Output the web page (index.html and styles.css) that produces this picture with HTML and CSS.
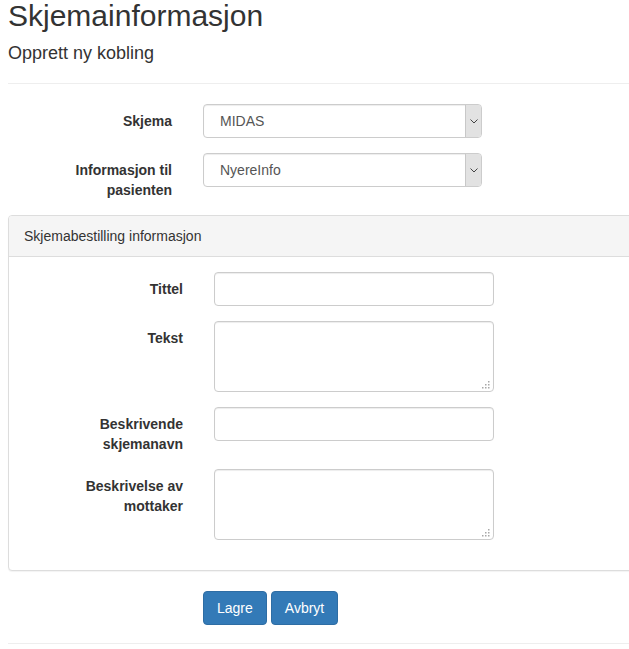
FILE: index.html
```html
<!DOCTYPE html>
<html lang="no">
<head>
<meta charset="utf-8">
<title>Skjemainformasjon</title>
<link rel="stylesheet" href="styles.css">
</head>
<body>
<div class="page">
  <h1 class="title">Skjemainformasjon</h1>
  <h2 class="subtitle">Opprett ny kobling</h2>
  <hr class="rule">
  <form class="form">
    <div class="row">
      <label class="label label-outer">Skjema</label>
      <div class="select-wrap">
        <select class="select"><option>MIDAS</option></select>
        <span class="arrow"><svg width="8" height="5" viewBox="0 0 8 5"><path d="M0.5 0.5 L4 4 L7.5 0.5" fill="none" stroke="#444" stroke-width="1"/></svg></span>
      </div>
    </div>
    <div class="row">
      <label class="label label-outer">Informasjon til pasienten</label>
      <div class="select-wrap">
        <select class="select"><option>NyereInfo</option></select>
        <span class="arrow"><svg width="8" height="5" viewBox="0 0 8 5"><path d="M0.5 0.5 L4 4 L7.5 0.5" fill="none" stroke="#444" stroke-width="1"/></svg></span>
      </div>
    </div>

    <div class="panel">
      <div class="panel-heading">Skjemabestilling informasjon</div>
      <div class="panel-body">
        <div class="row">
          <label class="label label-inner">Tittel</label>
          <input class="input" type="text">
        </div>
        <div class="row">
          <label class="label label-inner">Tekst</label>
          <div class="area-wrap">
            <textarea class="area"></textarea>
            <svg class="grip" width="8" height="8" viewBox="0 0 8 8"><g fill="#a8a8a8"><rect x="6" y="0" width="1.5" height="1.5"/><rect x="3" y="3" width="1.5" height="1.5"/><rect x="6" y="3" width="1.5" height="1.5"/><rect x="0" y="6" width="1.5" height="1.5"/><rect x="3" y="6" width="1.5" height="1.5"/><rect x="6" y="6" width="1.5" height="1.5"/></g></svg>
          </div>
        </div>
        <div class="row">
          <label class="label label-inner">Beskrivende skjemanavn</label>
          <input class="input" type="text">
        </div>
        <div class="row">
          <label class="label label-inner">Beskrivelse av mottaker</label>
          <div class="area-wrap">
            <textarea class="area"></textarea>
            <svg class="grip" width="8" height="8" viewBox="0 0 8 8"><g fill="#a8a8a8"><rect x="6" y="0" width="1.5" height="1.5"/><rect x="3" y="3" width="1.5" height="1.5"/><rect x="6" y="3" width="1.5" height="1.5"/><rect x="0" y="6" width="1.5" height="1.5"/><rect x="3" y="6" width="1.5" height="1.5"/><rect x="6" y="6" width="1.5" height="1.5"/></g></svg>
          </div>
        </div>
      </div>
    </div>

    <div class="actions">
      <button type="button" class="btn">Lagre</button>
      <button type="button" class="btn">Avbryt</button>
    </div>
  </form>
  <hr class="rule rule-bottom">
</div>
</body>
</html>
```

FILE: styles.css
```css
html, body {
  margin: 0;
  padding: 0;
  overflow: hidden;
  background: #fff;
}

body {
  font-family: "Liberation Sans", Arial, sans-serif;
  font-size: 14px;
  line-height: 20px;
  color: #333;
}

.page {
  width: 660px;
  padding: 0 0 0 8px;
}

.title {
  margin: 1px 0 0;
  font-size: 30px;
  line-height: 30px;
  font-weight: normal;
  color: #333;
}

.subtitle {
  margin: 12px 0 0;
  font-size: 18px;
  line-height: 20px;
  font-weight: normal;
  color: #333;
}

.rule {
  margin: 20px 0 20px;
  border: 0;
  border-top: 1px solid #eee;
  height: 0;
}

.rule-bottom {
  margin: 18px 0 0;
}

.form {
  margin: 0;
}

.row {
  display: flex;
  align-items: flex-start;
  margin-bottom: 15px;
}

.label {
  box-sizing: border-box;
  flex: none;
  padding-top: 7px;
  font-weight: bold;
  text-align: right;
  line-height: 20px;
}

.label-outer {
  width: 195px;
  padding-left: 40px;
  padding-right: 31px;
}

.label-inner {
  width: 190px;
  padding-left: 40px;
  padding-right: 31px;
}

.select-wrap {
  position: relative;
  width: 279px;
  height: 34px;
}

.select {
  -webkit-appearance: none;
  appearance: none;
  box-sizing: border-box;
  width: 279px;
  height: 34px;
  margin: 0;
  padding: 0 24px 0 16px;
  border: 1px solid #ccc;
  border-radius: 4px;
  background: #fff;
  font-family: "Liberation Sans", Arial, sans-serif;
  font-size: 14px;
  color: #555;
  box-shadow: inset 0 1px 1px rgba(0, 0, 0, 0.075);
}

.arrow {
  position: absolute;
  top: 1px;
  right: 1px;
  bottom: 1px;
  width: 15px;
  display: flex;
  align-items: center;
  justify-content: center;
  background: #e2e2e2;
  border-left: 1px solid #c8c8c8;
  border-radius: 0 3px 3px 0;
  pointer-events: none;
}

.input {
  box-sizing: border-box;
  width: 280px;
  height: 34px;
  margin: 0;
  padding: 6px 12px;
  border: 1px solid #ccc;
  border-radius: 4px;
  background: #fff;
  font-family: "Liberation Sans", Arial, sans-serif;
  font-size: 14px;
  color: #555;
  box-shadow: inset 0 1px 1px rgba(0, 0, 0, 0.075);
}

.area-wrap {
  position: relative;
  width: 280px;
  height: 71px;
}

.area {
  display: block;
  box-sizing: border-box;
  width: 280px;
  height: 71px;
  margin: 0;
  padding: 6px 12px;
  border: 1px solid #ccc;
  border-radius: 4px;
  resize: none;
  font-family: "Liberation Sans", Arial, sans-serif;
  font-size: 14px;
  color: #555;
  box-shadow: inset 0 1px 1px rgba(0, 0, 0, 0.075);
}

.grip {
  position: absolute;
  right: 4px;
  bottom: 3px;
}

.panel {
  border: 1px solid #ddd;
  border-radius: 4px;
  margin-bottom: 20px;
  background: #fff;
  box-shadow: 0 1px 1px rgba(0, 0, 0, 0.05);
}

.panel-heading {
  padding: 10px 15px;
  background: #f5f5f5;
  border-bottom: 1px solid #ddd;
  border-radius: 3px 3px 0 0;
  color: #333;
}

.panel-body {
  padding: 15px 15px 0;
}

.panel-body .row:last-child {
  margin-bottom: 30px;
}

.actions {
  padding-left: 195px;
  display: flex;
  gap: 4px;
}

.btn {
  box-sizing: border-box;
  height: 34px;
  margin: 0;
  padding: 6px 13px;
  border: 1px solid #2e6da4;
  border-radius: 4px;
  background: #337ab7;
  color: #fff;
  font-family: "Liberation Sans", Arial, sans-serif;
  font-size: 14px;
  line-height: 20px;
}
```
